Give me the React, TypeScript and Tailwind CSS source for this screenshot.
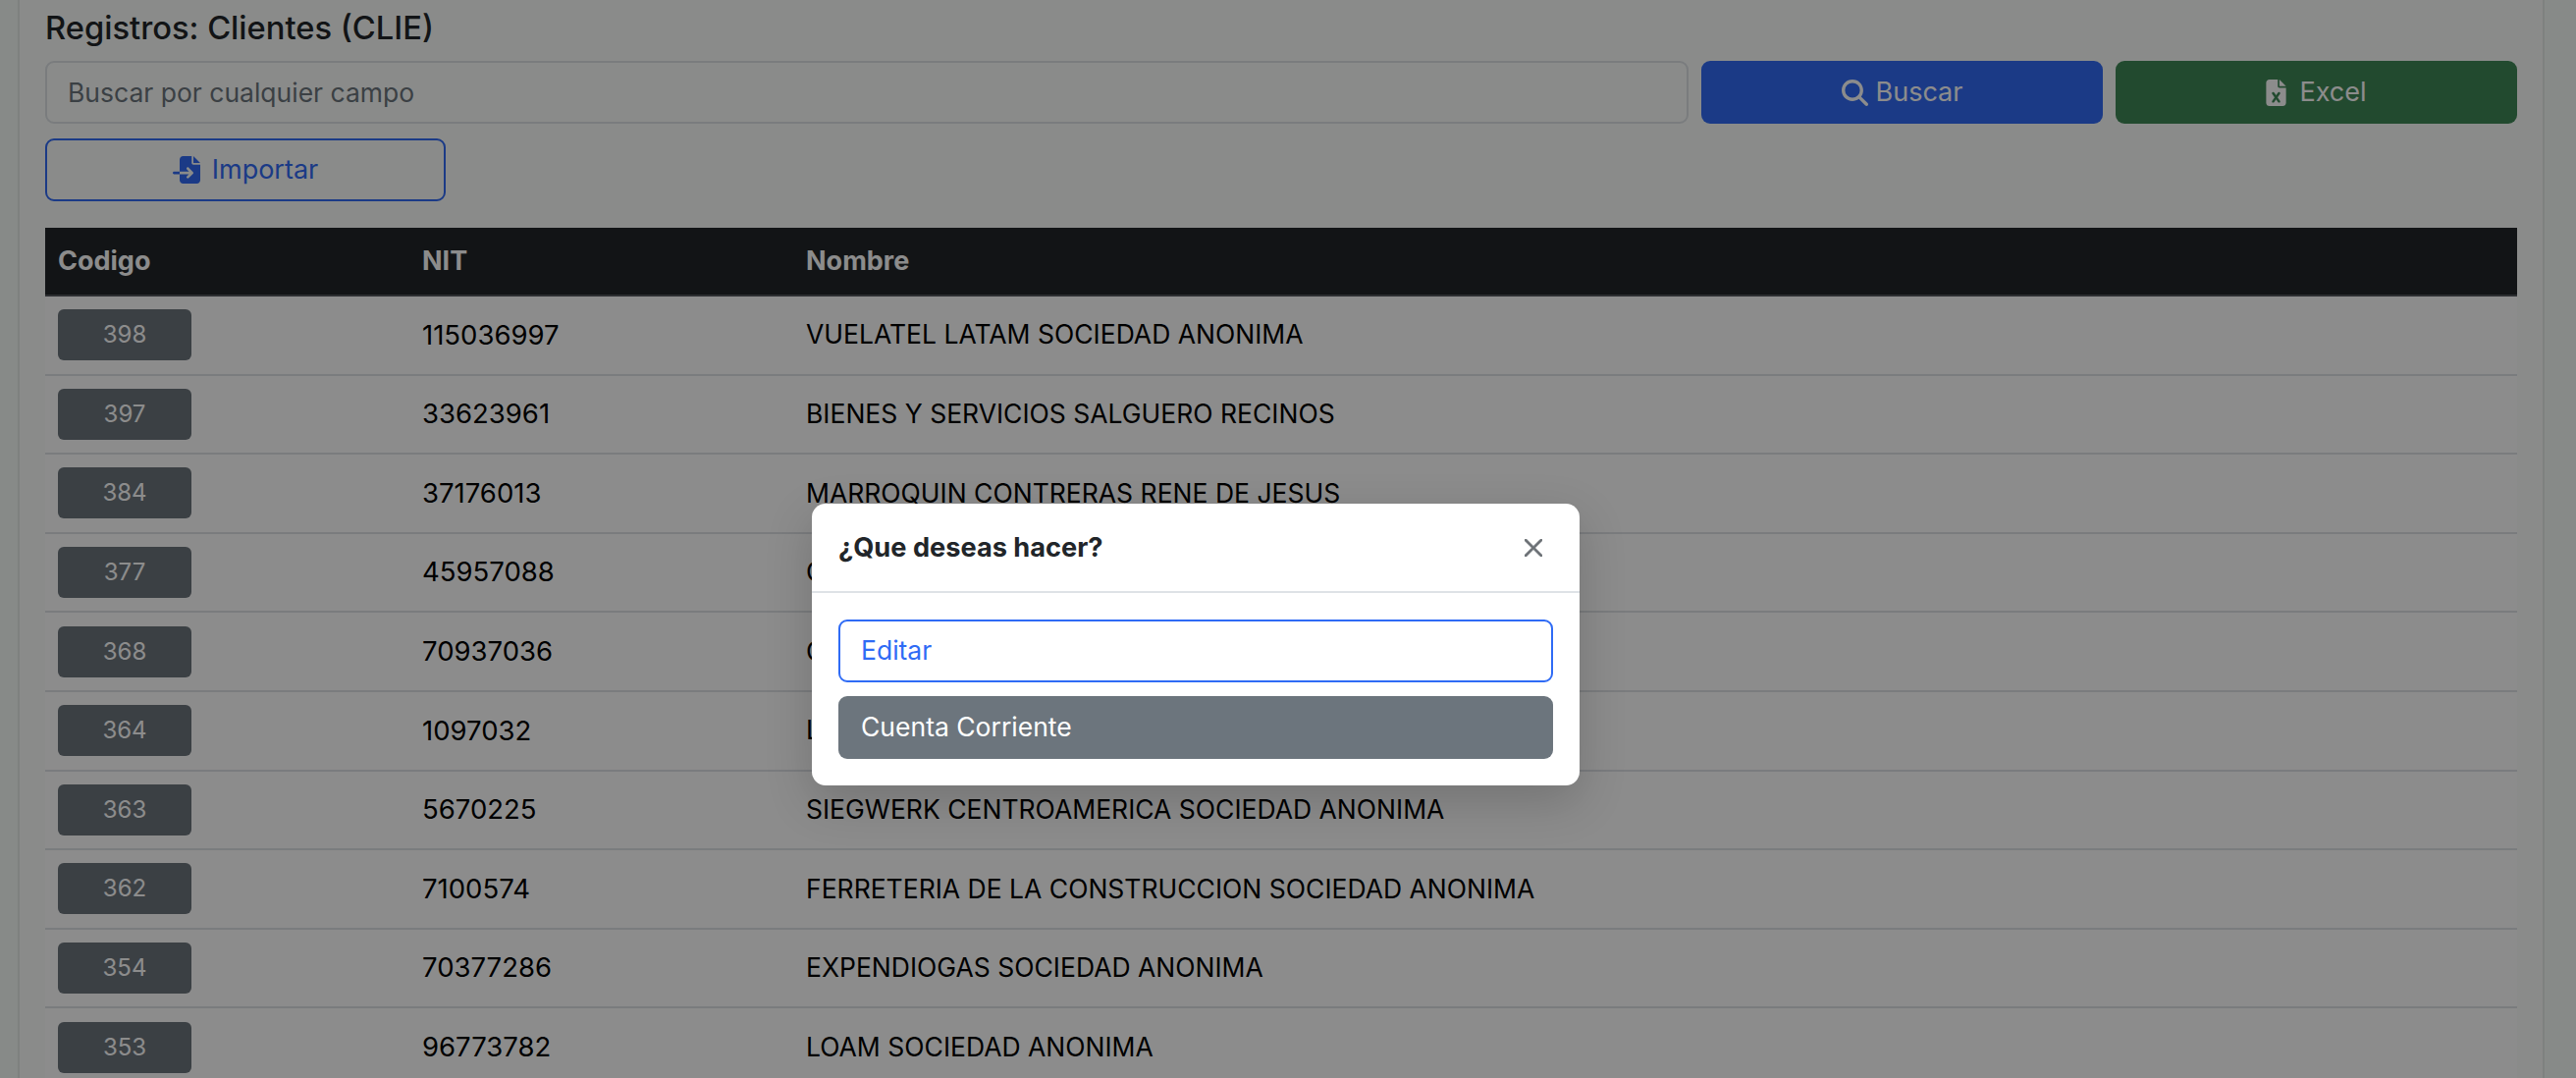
import { FaFileExcel, FaFileImport, FaMagnifyingGlass } from "react-icons/fa6";

const rows = [
  { code: "398", nit: "115036997", name: "VUELATEL LATAM SOCIEDAD ANONIMA" },
  { code: "397", nit: "33623961", name: "BIENES Y SERVICIOS SALGUERO RECINOS" },
  { code: "384", nit: "37176013", name: "MARROQUIN CONTRERAS RENE DE JESUS" },
  { code: "377", nit: "45957088", name: "C" },
  { code: "368", nit: "70937036", name: "C" },
  { code: "364", nit: "1097032", name: "L" },
  { code: "363", nit: "5670225", name: "SIEGWERK CENTROAMERICA SOCIEDAD ANONIMA" },
  { code: "362", nit: "7100574", name: "FERRETERIA DE LA CONSTRUCCION SOCIEDAD ANONIMA" },
  { code: "354", nit: "70377286", name: "EXPENDIOGAS SOCIEDAD ANONIMA" },
  { code: "353", nit: "96773782", name: "LOAM SOCIEDAD ANONIMA" },
];

export default function App() {
  return (
    <div className="relative h-[1098px] w-[2624px] overflow-hidden bg-[#f6fbf8] font-['Inter',sans-serif] text-[#212529]">
      <div className="ml-[18px] h-full w-[2574px] border-x-2 border-[#e6ebe7] bg-[#fbfefb] px-[26px]">
        <h5 className="h-[62px] pt-[8px] text-[32.7px] font-medium leading-[40px]">Registros: Clientes (CLIE)</h5>

        <div className="flex gap-[13px]">
          <input
            readOnly
            placeholder="Buscar por cualquier campo"
            className="h-[64px] min-w-0 flex-1 rounded-[9px] border-2 border-[#dee2e6] bg-transparent px-[21px] text-[26.5px] outline-none placeholder:text-[#6c757d]"
          />
          <button className="flex h-[64px] w-[409px] items-center justify-center gap-[8px] rounded-[9px] bg-[#326bf5] text-[27px] text-white">
            <FaMagnifyingGlass className="h-[27px] w-[27px]" />
            Buscar
          </button>
          <button className="flex h-[64px] w-[409px] items-center justify-center gap-[13px] rounded-[9px] bg-[#3f8757] text-[27px] text-white">
            <FaFileExcel className="h-[27px] w-[21px]" />
            Excel
          </button>
        </div>

        <button className="mt-[15px] flex h-[64px] w-[408px] items-center justify-center gap-[12px] rounded-[9px] border-2 border-[#326bf5] text-[27px] text-[#326bf5]">
          <FaFileImport className="h-[28px] w-[28px]" />
          Importar
        </button>

        <table className="mt-[27px] w-[2518px] table-fixed border-collapse">
          <colgroup>
            <col className="w-[371px]" />
            <col className="w-[391px]" />
            <col />
          </colgroup>
          <thead>
            <tr className="h-[69px] border-b-2 border-[#50545a] bg-[#212529] text-left text-[27px] font-bold text-white">
              <th className="px-[13px]">Codigo</th>
              <th className="px-[13px]">NIT</th>
              <th className="px-[13px]">Nombre</th>
            </tr>
          </thead>
          <tbody className="text-[26.5px] text-black">
            {rows.map((row) => (
              <tr key={row.code} className="h-[80.6px] border-b-2 border-[#dee2e6] bg-white">
                <td className="px-[13px]">
                  <span className="flex h-[52px] w-[136px] items-center justify-center rounded-[6px] bg-[#6c757d] text-[24px] text-white">
                    {row.code}
                  </span>
                </td>
                <td className="px-[13px] text-[27.5px]">{row.nit}</td>
                <td className="px-[13px]">{row.name}</td>
              </tr>
            ))}
          </tbody>
        </table>
      </div>

      {/* backdrop */}
      <div className="absolute inset-0 bg-black/45" />

      {/* modal */}
      <div className="absolute left-[827px] top-[513px] w-[782px] rounded-[14px] bg-white shadow-[0_16px_48px_rgba(0,0,0,0.175)]">
        <div className="flex h-[91px] items-center justify-between border-b-2 border-[#dee2e6] px-[27px] pt-[2px]">
          <h5 className="text-[27.2px] font-bold text-[#212529]">¿Que deseas hacer?</h5>
          <svg viewBox="0 0 16 16" className="mb-[2px] mr-[11px] h-[18px] w-[18px] fill-[#6b7075] stroke-[#6b7075] stroke-[0.6]">
            <path d="M.293.293a1 1 0 0 1 1.414 0L8 6.586 14.293.293a1 1 0 1 1 1.414 1.414L9.414 8l6.293 6.293a1 1 0 0 1-1.414 1.414L8 9.414l-6.293 6.293a1 1 0 0 1-1.414-1.414L6.586 8 .293 1.707a1 1 0 0 1 0-1.414z" />
          </svg>
        </div>
        <div className="flex flex-col gap-[14px] px-[27px] pb-[27px] pt-[27px]">
          <button className="flex h-[64px] items-center rounded-[9px] border-2 border-[#2f6bf5] px-[21px] text-[26.5px] text-[#2f6bf5]">Editar</button>
          <button className="flex h-[64px] items-center rounded-[9px] bg-[#6c757d] px-[23px] text-[26.5px] text-white">Cuenta Corriente</button>
        </div>
      </div>
    </div>
  );
}
